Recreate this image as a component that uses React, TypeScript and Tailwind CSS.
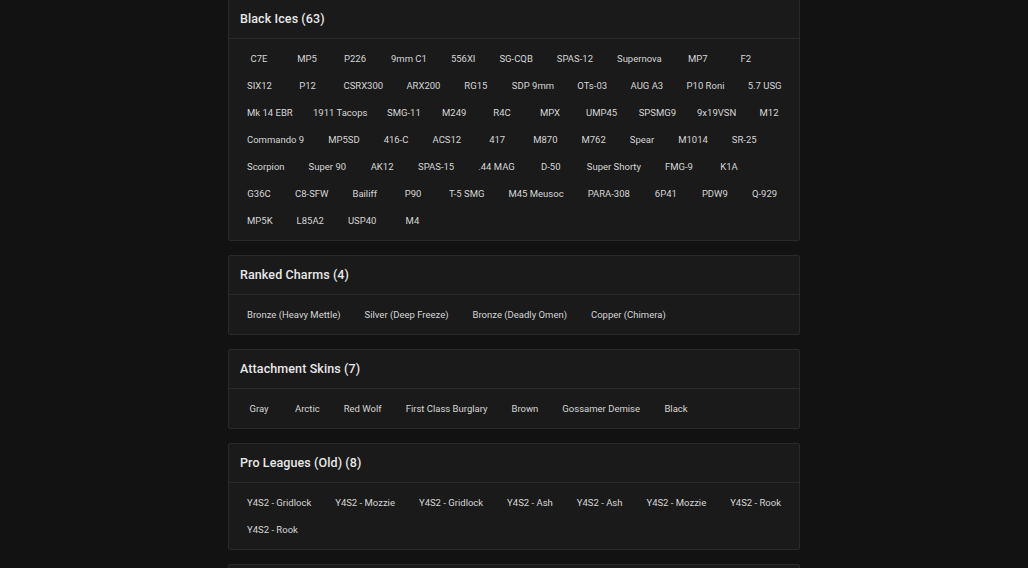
import React from "react";

type Section = { title: string; rows: string[][] };

const sections: Section[] = [
  {
    title: "Black Ices (63)",
    rows: [
      ["C7E", "MP5", "P226", "9mm C1", "556XI", "SG-CQB", "SPAS-12", "Supernova", "MP7", "F2"],
      ["SIX12", "P12", "CSRX300", "ARX200", "RG15", "SDP 9mm", "OTs-03", "AUG A3", "P10 Roni", "5.7 USG"],
      ["Mk 14 EBR", "1911 Tacops", "SMG-11", "M249", "R4C", "MPX", "UMP45", "SPSMG9", "9x19VSN", "M12"],
      ["Commando 9", "MP5SD", "416-C", "ACS12", "417", "M870", "M762", "Spear", "M1014", "SR-25"],
      ["Scorpion", "Super 90", "AK12", "SPAS-15", ".44 MAG", "D-50", "Super Shorty", "FMG-9", "K1A"],
      ["G36C", "C8-SFW", "Bailiff", "P90", "T-5 SMG", "M45 Meusoc", "PARA-308", "6P41", "PDW9", "Q-929"],
      ["MP5K", "L85A2", "USP40", "M4"],
    ],
  },
  {
    title: "Ranked Charms (4)",
    rows: [["Bronze (Heavy Mettle)", "Silver (Deep Freeze)", "Bronze (Deadly Omen)", "Copper (Chimera)"]],
  },
  {
    title: "Attachment Skins (7)",
    rows: [["Gray", "Arctic", "Red Wolf", "First Class Burglary", "Brown", "Gossamer Demise", "Black"]],
  },
  {
    title: "Pro Leagues (Old) (8)",
    rows: [
      ["Y4S2 - Gridlock", "Y4S2 - Mozzie", "Y4S2 - Gridlock", "Y4S2 - Ash", "Y4S2 - Ash", "Y4S2 - Mozzie", "Y4S2 - Rook"],
      ["Y4S2 - Rook"],
    ],
  },
];

function Card({ title, rows }: Section) {
  return (
    <div className="rounded-[2px] border border-[#2a2a2a] bg-[#1a1a1a]">
      <div className="flex h-[39px] items-center border-b border-[#2a2a2a] px-[11px]">
        <h3 className="text-[12.5px] font-medium tracking-[0.1px] text-[#e8e8e8]">{title}</h3>
      </div>
      <div className="flex flex-col p-[6px]">
        {rows.map((row, r) => (
          <div key={r} className="flex">
            {row.map((it, i) => (
              <span
                key={i}
                className="min-w-[48px] px-3 py-[6px] text-center text-[9.5px] leading-[15px] whitespace-nowrap text-[#d6d6d6]"
              >
                {it}
              </span>
            ))}
          </div>
        ))}
      </div>
    </div>
  );
}

export default function App() {
  return (
    <div
      className="h-[568px] overflow-hidden bg-[#121212]"
      style={{ fontFamily: "Roboto, 'Open Sans', sans-serif" }}
    >
      <div className="mx-auto -mt-[1px] flex w-[572px] flex-col gap-[14px]">
        {sections.map((s) => (
          <Card key={s.title} {...s} />
        ))}
        <div className="h-[40px] rounded-[2px] border border-[#2a2a2a] bg-[#1a1a1a]" />
      </div>
    </div>
  );
}
